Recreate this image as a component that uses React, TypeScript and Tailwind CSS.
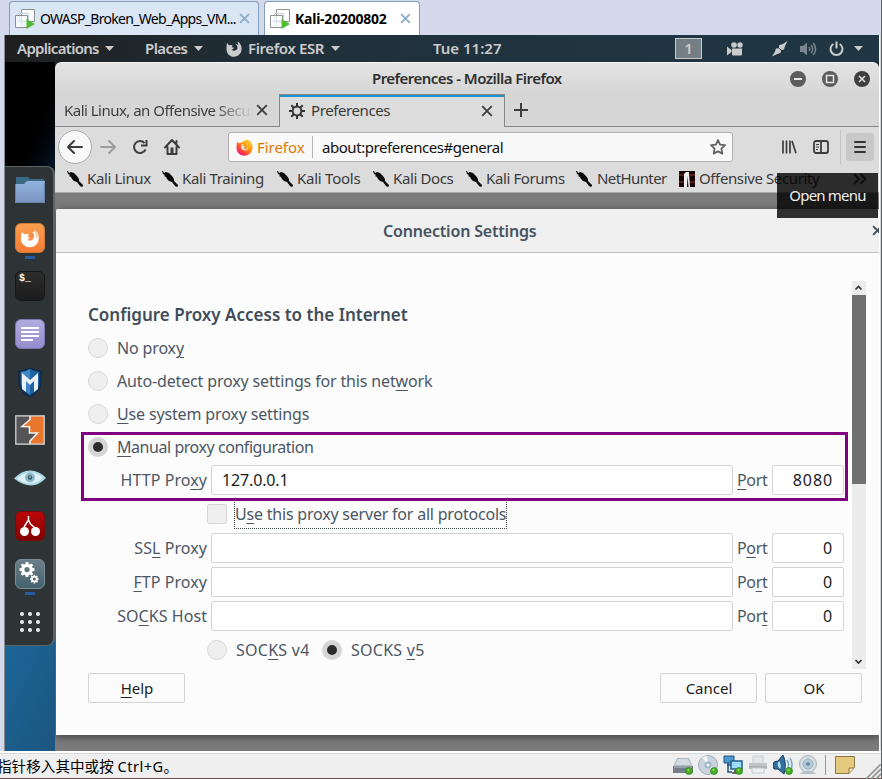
import React from "react";

const SANS = "font-['Noto_Sans','Noto_Sans_CJK_SC',sans-serif]";

function VmIcon() {
  return (
    <svg width="20" height="20" viewBox="0 0 20 20" fill="none" className="shrink-0">
      <path d="M6.5 0.500h13v12h-13z" fill="#fff" stroke="#909090" />
      <path d="M4.500 4.500h9v9h-9z" stroke="#bdd2e8" />
      <path d="M0.500 6.500h12v12h-12z" fill="#fff" fillOpacity=".7" stroke="#909090" />
      <path d="M6 8v9M2 12h9" stroke="#d6e4f2" />
      <path d="M11.500 10l8.500 5-8.500 5z" fill="#4fbb32" />
    </svg>
  );
}

function Cross({ size, color, width }: { size: number; color: string; width: number }) {
  return (
    <svg width={size} height={size} viewBox="0 0 10 10" className="shrink-0">
      <path d="M1 1l8 8M9 1l-8 8" stroke={color} strokeWidth={width} />
    </svg>
  );
}

function Caret() {
  return (
    <svg width="9" height="5" viewBox="0 0 9 5" className="shrink-0">
      <path d="M0 0h9L4.500 5z" fill="#cbcbcb" />
    </svg>
  );
}

function FoxGlyph({ size, color }: { size: number; color: string }) {
  return (
    <svg width={size} height={size} viewBox="0 0 16 16" className="shrink-0">
      <path
        d="M1 2L3 4.200 5.300 3.900 6.600 4.500 5.700 6.200 8.200 6.800 6.800 8.200 5.700 8.600C6.700 10.500 9.300 9.700 10.200 8.700L11.200 8.600C12.200 5.500 10.400 3.600 9.300 2.500L12.300 4 11.500 0.500C13.500 1.500 15.800 4 15.600 8.300 15.400 12.700 12.200 15.700 8 15.700 3.700 15.700 0.600 12.500 0.500 8.400 0.500 6 .7 4 1 2z"
        fill={color}
      />
    </svg>
  );
}

function FoxColor() {
  return (
    <svg width="17" height="17" viewBox="0 0 16 16" className="shrink-0">
      <defs>
        <linearGradient id="fox" x1="1" y1="0" x2="0.200" y2="1">
          <stop offset="0" stopColor="#ffe646" />
          <stop offset=".45" stopColor="#ff980e" />
          <stop offset=".8" stopColor="#ff3647" />
          <stop offset="1" stopColor="#e31587" />
        </linearGradient>
      </defs>
      <path d="M1 2.500L3 4 5.300 3.200 10 0.500C13.500 1.500 15.800 4 15.600 8.300 15.400 12.700 12.200 15.700 8 15.700 3.700 15.700 0.600 12.500 0.500 8.400 0.500 6 .7 4 1 2.500z" fill="url(#fox)" />
      <path d="M5.700 4.600l1.700.7L6 6.800l3 .2-2 1.400C8 10 9.600 9.500 10.600 8.300 10.500 11 5.500 11.500 4.800 8z" fill="#fff4e0" />
      <path d="M9 3.200C12 5 12 9 9.500 11" stroke="#ffd43a" strokeWidth="1" fill="none" />
    </svg>
  );
}

function HostTabs() {
  return (
    <div className="flex h-[35px] shrink-0 items-end pl-[9px]">
      <div className="flex h-[34px] w-[250px] items-center rounded-t-[4px] border border-b-0 border-[#7f9dbd] bg-[#dae6f4] pl-[5px] text-black">
        <VmIcon />
        <span className="ml-[5px] w-[199px] whitespace-nowrap text-[14px] tracking-[-0.700px]">OWASP_Broken_Web_Apps_VM...</span>
        <Cross size={11} color="#8eafcb" width={1.700} />
      </div>
      <div className="ml-[5px] flex h-[34px] w-[156px] items-center rounded-t-[4px] border border-b-0 border-[#7f9dbd] bg-white pl-[5px] text-black">
        <VmIcon />
        <span className="ml-[5px] w-[105px] whitespace-nowrap text-[14px] font-bold tracking-[-0.230px]">Kali-20200802</span>
        <Cross size={11} color="#8eafcb" width={1.700} />
      </div>
    </div>
  );
}

function TopBar() {
  return (
    <div className="flex h-[27px] shrink-0 items-center bg-linear-to-r from-[#1e1e1e] via-[#20303a] via-30% to-[#203644] pl-[12px] text-[15px] font-semibold whitespace-nowrap text-[#cbcbcb]">
      <span className="w-[88px] tracking-[-0.700px]">Applications</span>
      <Caret />
      <span className="ml-[31px] w-[49px] tracking-[-0.600px]">Places</span>
      <Caret />
      <span className="ml-[23px] flex"><FoxGlyph size={16} color="#cbcbcb" /></span>
      <span className="ml-[6px] w-[83px] tracking-[-0.400px]">Firefox ESR</span>
      <Caret />
      <span className="ml-[93px] w-[242px] tracking-[0px]">Tue 11:27</span>
      <span className="flex h-[21px] w-[27px] items-center justify-center border border-[#c7cacb] bg-[#747f85]">1</span>
      <svg width="16" height="14" viewBox="0 0 16 14" className="ml-[25px] shrink-0" fill="#cbcbcb">
        <circle cx="7" cy="3" r="2.800" />
        <circle cx="13" cy="3" r="2.700" />
        <path d="M5 6.500h10v6a1 1 0 0 1-1 1H6a1 1 0 0 1-1-1zM0 4.500L4.500 8v2L0 13.500z" />
      </svg>
      <svg width="16" height="16" viewBox="0 0 16 16" className="ml-[29px] shrink-0" fill="#cbcbcb">
        <path d="M15.500 0L12.800 5.500 12 8.500 9.500 9 6.800 6.500 7.300 4 10.500 3.300zM0 15.500l3-5L4 7.500l2.600-.3L9 9.600l-.5 2.400-3.200.9z" />
      </svg>
      <svg width="17" height="16" viewBox="0 0 17 16" className="ml-[12px] shrink-0" fill="none" stroke="#7c868c" strokeWidth="1.400">
        <path d="M0 5h3l4-3.500v13L3 11H0z" fill="#7c868c" stroke="none" />
        <path d="M9 6q1.500 2 0 4M11.200 4q3 4 0 8M13.300 2q4.500 6 0 12" />
      </svg>
      <svg width="15" height="16" viewBox="0 0 15 16" className="ml-[12px] shrink-0" fill="none" stroke="#cbcbcb" strokeWidth="2">
        <path d="M4.300 3A6 6 0 1 0 10.700 3M7.500 0.500v7" />
      </svg>
      <span className="ml-[10px]"><Caret /></span>
    </div>
  );
}

function DockCell({ children, active = false }: { children: React.ReactNode; active?: boolean }) {
  return (
    <div className="relative flex h-[48px] items-center justify-center">
      {children}
      {active && <span className="absolute bottom-[3px] h-[3px] w-[10px] bg-[#215d9c]" />}
    </div>
  );
}

const gearPath =
  "M8.300 0h3.400l.5 2.700 1.700.7L16.100 2 18.300 4.200 16.700 6.200l.7 1.700 2.600.5v3.300l-2.600.5-.7 1.700 1.600 2.200-2.300 2.300-2.200-1.600-1.700.7-.4 2.500H8.300l-.5-2.500-1.700-.7-2.200 1.600L1.600 16l1.600-2.200-.7-1.700L0 11.700V8.400l2.600-.5.7-1.700L1.700 4.100 4 1.900l2.200 1.500 1.700-.7z";

function Dock() {
  return (
    <div className="flex w-[50px] shrink-0 flex-col bg-linear-to-b from-black to-[#02101c] to-20%">
      <div className="h-[104px] shrink-0 bg-linear-to-br from-black from-50% to-[#041524]" />
      <div className="shrink-0 bg-linear-to-b from-[#020e19] from-50% to-[#1a6194] to-50%">
      <div className="rounded-r-[8px] border-y border-r-2 border-[#5f6364] bg-[#2e3436] px-0">
        <div className="-my-px pl-[2px]">
          <DockCell>
            <svg width="30" height="26" viewBox="0 0 30 26">
              <defs>
                <linearGradient id="folder" x2="0" y2="1"><stop stopColor="#8fb5de" /><stop offset="1" stopColor="#7b91c0" /></linearGradient>
              </defs>
              <path d="M1 0h12l2 2h14v9H1z" fill="#3c6986" />
              <path d="M0 7h9l3-3h18v22H0z" fill="url(#folder)" />
              <path d="M0.500 25.500h29M.5 7v18M29.500 5v20" stroke="#6685ad" />
            </svg>
          </DockCell>
          <DockCell active>
            <span className="flex size-[30px] items-center justify-center rounded-[6px] border border-[#cf7d3b] bg-linear-to-b from-[#fb9e50] to-[#f57b34]">
              <svg width="20" height="19" viewBox="0 0 22 20">
                <path d="M2 3l3 2.300 3-.4 2 1.200-2 2 3 1.100-2.500 2.200c2 2 5 .5 6-.8l1-3.600C15.500 4 14 3 12.500 2.500L16 3l-.5-2.500C20 3 21 7 20.500 11c-.7 5-4.500 8.500-9.500 8.500S1.500 16 1 11C1 8 1.200 5.500 2 3z" fill="#fff" />
                <path d="M16 1.500q3.500 3 2.500 8" fill="none" stroke="#f7a76c" />
              </svg>
            </span>
          </DockCell>
          <DockCell>
            <span className="size-[30px] rounded-[6px] border border-[#171717] bg-linear-to-b from-[#2d2d2d] to-[#1c1c1c] pl-[3px] font-['Liberation_Mono',monospace] text-[10px] leading-[13px] font-bold text-white">$_</span>
          </DockCell>
          <DockCell>
            <span className="flex size-[30px] flex-col justify-center gap-[2px] rounded-[6px] border border-[#8277b3] bg-linear-to-b from-[#b3acdf] to-[#958cce] pl-[5px]">
              <span className="h-[2px] w-[18px] bg-white" /><span className="h-[2px] w-[18px] bg-white" /><span className="h-[2px] w-[18px] bg-white" /><span className="h-[2px] w-[12px] bg-white" />
            </span>
          </DockCell>
          <DockCell>
            <svg width="24" height="30" viewBox="0 0 24 30">
              <path d="M1 4q5 0 11-3 6 3 11 3v13q-1 8-11 13Q2 25 1 17z" fill="#123c67" stroke="#0a253f" />
              <path d="M3 5q4 0 9-3v26Q4 23 3 17z" fill="#3b86c8" />
              <path d="M12 2q5 3 9 3v12q-1 6-9 11z" fill="#1f63a2" />
              <path d="M4 22V6l8 7 8-7v16l-4 3V14l-4 4-4-4v11z" fill="#e9f0f7" />
            </svg>
          </DockCell>
          <DockCell>
            <svg width="30" height="30" viewBox="0 0 30 30">
              <path d="M1 1h28v28H1z" fill="#555557" />
              <path d="M15 1v3.500L7 11.500l7.500.5v6h8L15 26v3h14V1z" fill="#e8762c" />
              <path d="M15 1v3.500L7 11.500l7.500.3V18h8L15 26v3" fill="none" stroke="#f5f1ed" strokeWidth="1.600" />
              <path d="M.8.8h28.400v28.400H.8z" fill="none" stroke="#ddd" strokeWidth="1.200" />
            </svg>
          </DockCell>
          <DockCell>
            <svg width="32" height="16" viewBox="0 0 32 16">
              <path d="M0 8.500Q8 0 17 .5T32 8q-7 7.500-15 7.500T0 8.500z" fill="#a9d7e6" />
              <path d="M3 8.500q6-5.500 13-6t13 5.500q-6 5.500-13 5.500T3 8.500z" fill="#dcf1f6" />
              <circle cx="16" cy="7.500" r="5" fill="#8db8c8" />
              <circle cx="16" cy="7.500" r="2.300" fill="#3c5b68" />
              <circle cx="16" cy="7" r="0.800" fill="#ddd" />
            </svg>
          </DockCell>
          <DockCell>
            <span className="flex size-[30px] items-center justify-center rounded-[6px] border border-[#7b0a0a] bg-linear-to-b from-[#ba0808] to-[#850000]">
              <svg width="22" height="22" viewBox="0 0 22 22">
                <path d="M9.500 1v4L5 12M9.500 5l2 4L16 13" stroke="#fff" strokeWidth="1.500" fill="none" />
                <circle cx="5.500" cy="16.500" r="4.500" fill="#fff" /><circle cx="16.500" cy="16.500" r="4.500" fill="#fff" />
              </svg>
            </span>
          </DockCell>
          <DockCell active>
            <span className="flex size-[30px] items-center justify-center rounded-[6px] border border-[#7b8d96] bg-linear-to-b from-[#6b7f89] to-[#46616e]">
              <svg width="22" height="24" viewBox="0 0 28 32">
                <path fillRule="evenodd" d={gearPath + "M10 6.500a3.500 3.500 0 1 0 0 7 3.500 3.500 0 0 0 0-7z"} fill="#fff" />
                <path fillRule="evenodd" transform="translate(14 17) scale(.58)" d={gearPath + "M10 6.500a3.500 3.500 0 1 0 0 7 3.500 3.500 0 0 0 0-7z"} fill="#fff" />
              </svg>
            </span>
          </DockCell>
          <DockCell>
            <span className="grid grid-cols-3 gap-[4px]">
              {Array.from({ length: 9 }, (_, i) => <span key={i} className="size-[4px] rounded-full bg-[#eee]" />)}
            </span>
          </DockCell>
        </div>
      </div>
      </div>
      <div className="grow bg-linear-to-br from-[#1b6698] to-[#1c557f]" />
    </div>
  );
}

function WindowButton({ children, dark = false }: { children: React.ReactNode; dark?: boolean }) {
  return (
    <svg width="16" height="16" viewBox="0 0 16 16" fill="none" stroke="#e4e4e4" strokeWidth="1.500">
      <circle cx="8" cy="8" r="8" fill={dark ? "#404040" : "#5c5c5c"} stroke="none" />
      {children}
    </svg>
  );
}

function TitleBar() {
  return (
    <div className="flex h-[32px] shrink-0 items-center rounded-t-[6px] border-t border-[#f4f4f4] bg-linear-to-b from-[#e3e3e3] to-[#d6d6d6]">
      <span className="ml-[317px] w-[418px] whitespace-nowrap text-[15px] font-semibold tracking-[-0.540px] text-[#303030]">Preferences - Mozilla Firefox</span>
      <span className="flex gap-[16px]">
        <WindowButton><path d="M4 8h8" strokeWidth="2" /></WindowButton>
        <WindowButton><path d="M4.500 4.500h7v7h-7z" /></WindowButton>
        <WindowButton dark><path d="M5 5l6 6M11 5l-6 6" /></WindowButton>
      </span>
    </div>
  );
}

function BrowserTabs() {
  return (
    <div className="flex h-[33px] shrink-0 bg-[#d6d6d6] text-[15px] whitespace-nowrap text-[#3a3a3a]">
      <div className="flex w-[224px] items-center border-b border-[#858585] pl-[9px]">
        <span className="w-[187px] bg-linear-to-r from-[#3a3a3a] from-80% to-[#d0d0d0] bg-clip-text tracking-[-0.520px] text-transparent">Kali Linux, an Offensive Secu</span>
        <span className="ml-[5px] flex"><Cross size={12} color="#3d3d3d" width={1.500} /></span>
      </div>
      <div className="flex w-[226px] items-center border-x border-t border-[#858585] bg-[#dcdcdc] shadow-[inset_0_2px_0_#2090d0]">
        <svg width="16" height="16" viewBox="0 0 16 16" className="ml-[9px]" fill="none" stroke="#333">
          <circle cx="8" cy="8" r="4.400" strokeWidth="2" />
          <path d="M8 0v3M8 13v3M0 8h3M13 8h3M2.300 2.300l2.200 2.200M11.500 11.500l2.200 2.200M13.700 2.300l-2.200 2.200M4.500 11.500l-2.200 2.200" strokeWidth="2" />
        </svg>
        <span className="ml-[6px] w-[170px] pb-[2px] tracking-[-0.400px]">Preferences</span>
        <Cross size={12} color="#3d3d3d" width={1.500} />
      </div>
      <div className="flex grow items-center border-b border-[#858585] pl-[9px]">
        <svg width="14" height="14" viewBox="0 0 14 14"><path d="M7 0v14M0 7h14" stroke="#3d3d3d" strokeWidth="2" /></svg>
      </div>
    </div>
  );
}

function NavBar() {
  return (
    <div className="flex h-[41px] shrink-0 items-center bg-[#dcdcdc] pb-px pl-[3px]">
      <span className="flex size-[34px] items-center justify-center rounded-full border border-[#aaa] bg-[#f8f8f8]">
        <svg width="16" height="16" viewBox="0 0 16 16" fill="none" stroke="#3d3d3d" strokeWidth="2" strokeLinecap="round" strokeLinejoin="round"><path d="M15 8H1M7 2L1 8l6 6" /></svg>
      </span>
      <svg width="16" height="16" viewBox="0 0 16 16" className="ml-[8px]" fill="none" stroke="#9c9c9c" strokeWidth="2" strokeLinecap="round" strokeLinejoin="round"><path d="M1 8h14M9 2l6 6-6 6" /></svg>
      <svg width="16" height="16" viewBox="0 0 16 16" className="ml-[16px]" fill="none" stroke="#3d3d3d" strokeWidth="2"><path d="M13.500 10.500A6 6 0 1 1 12.500 4M14.500 1v5.500H9" /></svg>
      <svg width="16" height="16" viewBox="0 0 16 16" className="ml-[16px]" fill="none" stroke="#3d3d3d" strokeWidth="2" strokeLinejoin="round" strokeLinecap="round"><path d="M1 8.500L8 1l7 7.500M3.500 8v7h9V8M12.500 2v2" /><path d="M6.500 8.500h3V14h-3z" fill="#3d3d3d" stroke="none" /></svg>
      <div className="ml-[48px] flex h-[30px] w-[505px] items-center rounded-[3px] border border-[#b1b1b1] bg-[#f9f9f9] pl-[7px] text-[15px] whitespace-nowrap">
        <FoxColor />
        <span className="ml-[4px] w-[55px] tracking-[-0.050px] text-[#e07800]">Firefox</span>
        <span className="h-[22px] w-px bg-[#b5b5b5]" />
        <span className="ml-[9px] w-[388px] tracking-[-0.450px] text-[#111]">about:preferences#general</span>
        <svg width="16" height="16" viewBox="0 0 16 16" fill="none" stroke="#626262" strokeWidth="1.800" strokeLinejoin="round"><path d="M8 1l2.100 4.600 4.900.6-3.600 3.400.9 5L8 12.200l-4.300 2.400.9-5L1 6.200l4.900-.6z" /></svg>
      </div>
      <svg width="16" height="16" viewBox="0 0 16 16" className="ml-[48px]" fill="none" stroke="#3d3d3d" strokeWidth="2"><path d="M2 1.500v13M5.500 1.500v13M9 1.500v13M11 2l4 12.300" strokeWidth="1.700" /></svg>
      <svg width="16" height="14" viewBox="0 0 16 14" className="ml-[16px]" fill="none" stroke="#3d3d3d" strokeWidth="1.800"><rect x="1" y="1" width="14" height="12" rx="2" /><path d="M8 1v12" /><path d="M3 4.500h3M3 7h3M3 9.500h2" strokeWidth="1" /></svg>
      <span className="ml-[11px] h-[34px] w-px bg-[#c3c3c3]" />
      <span className="ml-[5px] flex size-[28px] flex-col items-center justify-center gap-[3px] rounded-[3px] bg-[#c8c8c8]">
        <span className="h-[2px] w-[12px] rounded bg-[#333]" /><span className="h-[2px] w-[12px] rounded bg-[#333]" /><span className="h-[2px] w-[12px] rounded bg-[#333]" />
      </span>
    </div>
  );
}

function KaliIcon() {
  return (
    <svg width="16" height="16" viewBox="0 0 16 16" className="shrink-0">
      <path d="M0 0h1l1 2 2-1 3 1 3 3 2 3 0 2 4 4v1l-1 1-2-1-3-4-3-1-2-2-1-2-2-1 1-1-2-1z" fill="#0b0b0b" />
    </svg>
  );
}

function Bookmarks() {
  return (
    <div className="relative flex h-[25px] shrink-0 items-center border-b border-[#a7a7a7] bg-[#dcdcdc] pb-[3px] pl-[12px] text-[15px] tracking-[-0.380px] whitespace-nowrap text-[#3a3a3a]">
      <KaliIcon /><span className="ml-[4px] w-[75px]">Kali Linux</span>
      <KaliIcon /><span className="ml-[4px] w-[95px]">Kali Training</span>
      <KaliIcon /><span className="ml-[4px] w-[76px] tracking-[-0.250px]">Kali Tools</span>
      <KaliIcon /><span className="ml-[4px] w-[73px]">Kali Docs</span>
      <KaliIcon /><span className="ml-[4px] w-[90px]">Kali Forums</span>
      <KaliIcon /><span className="ml-[5px] w-[82px] tracking-[-0.600px]">NetHunter</span>
      <svg width="16" height="16" viewBox="0 0 16 16" className="shrink-0"><path d="M0 0h16v16H0z" fill="#160303" /><path d="M0 4h5M11 4h5M0 11h5M11 11h5" stroke="#541b1b" strokeWidth="2" /><path d="M5 16V3l2-2h3l1 15h-1.500L8.500 5 8 16z" fill="#eee" /></svg>
      <span className="ml-[4px] w-[154px]">Offensive Security</span>
      <svg width="14" height="12" viewBox="0 0 14 12" className="shrink-0" fill="none" stroke="#3d3d3d" strokeWidth="2"><path d="M1 1l5 5-5 5M7.500 1l5 5-5 5" /></svg>
      <div className="absolute top-[5px] left-[722px] z-10 flex h-[45px] w-[101px] items-center justify-center bg-black/80 text-[15px] tracking-[-0.800px] text-[#eee]">Open menu</div>
    </div>
  );
}

function U({ children }: { children: string }) {
  return <span className="underline decoration-1 underline-offset-[3px]">{children}</span>;
}

function Radio({ on = false }: { on?: boolean }) {
  return on ? (
    <span className="flex size-[20px] shrink-0 items-center justify-center rounded-full bg-[#d5d5d5]"><span className="size-[10px] rounded-full bg-[#2c2c2c]" /></span>
  ) : (
    <span className="size-[20px] shrink-0 rounded-full border border-[#d7d7d7] bg-[#efefef]" />
  );
}

function Option({ on, children }: { on?: boolean; children: React.ReactNode }) {
  return (
    <div className="flex h-[33px] items-center">
      <Radio on={on} />
      <span className="ml-[9px]">{children}</span>
    </div>
  );
}

function ProxyRow({ label, host = "", port, portLabel }: { label: React.ReactNode; host?: string; port: string; portLabel: React.ReactNode }) {
  return (
    <div className="flex h-[34px] items-center gap-[4px]">
      <span className="w-[119px] text-right tracking-[0.060px]">{label}</span>
      <span className="flex h-[30px] w-[522px] items-center rounded-[2px] border border-[#d3d3d5] bg-white pl-[10px] tracking-[-0.150px] text-[#1c1c1c]">{host}</span>
      <span className="w-[31px] tracking-[-0.350px]">{portLabel}</span>
      <span className="flex h-[30px] w-[72px] items-center justify-end rounded-[2px] border border-[#d3d3d5] bg-white pr-[10px] text-[16px] tracking-[0.900px] text-[#1c1c1c]">{port}</span>
    </div>
  );
}

function Button({ children }: { children: React.ReactNode }) {
  return <button className="h-[30px] w-[97px] rounded-[2px] border border-[#d3d3d5] bg-[#fbfbfb] pl-[1px] text-[15px] text-[#1c1c1c]">{children}</button>;
}

function Arrow({ down = false }: { down?: boolean }) {
  return (
    <svg width="14" height="14" viewBox="0 0 14 14" fill="none" stroke="#333" strokeWidth="1.700">
      <path d={down ? "M3.500 5l3 3 3-3" : "M3.500 8.500l3-3 3 3"} />
    </svg>
  );
}

function Dialog() {
  return (
    <div className="ml-px flex h-[526px] w-[823px] shrink-0 flex-col overflow-hidden rounded-tl-[2px] bg-[#fcfcfc] shadow-[0_2px_8px_rgba(0,0,0,.5)]">
      <div className="flex h-[44px] shrink-0 items-center border-b border-[#c2c2c2] bg-[#f0f0f0]">
        <span className="ml-[327px] w-[489px] shrink-0 whitespace-nowrap text-[16px] font-semibold tracking-[-0.180px] text-[#465360]">Connection Settings</span>
        <Cross size={11} color="#46535f" width={1.800} />
      </div>
      <div className="flex h-[416px] shrink-0">
        <div className="relative w-[796px] pt-[45px] pl-[32px] text-[16px] tracking-[-0.150px] whitespace-nowrap text-[#4c5763]">
          <h2 className="flex h-[33px] items-center text-[17px] font-semibold tracking-[0px] text-[#414d58]">Configure Proxy Access to the Internet</h2>
          <Option>No prox<U>y</U></Option>
          <Option>Auto-detect proxy settings for this net<U>w</U>ork</Option>
          <Option><U>U</U>se system proxy settings</Option>
          <Option on><span className="tracking-[-0.450px]"><U>M</U>anual proxy configuration</span></Option>
          <ProxyRow label={<>HTTP Pro<U>x</U>y</>} host="127.0.0.1" port="8080" portLabel={<><U>P</U>ort</>} />
          <div className="flex h-[34px] items-center pl-[119px]">
            <span className="size-[20px] rounded-[2px] border border-[#d7d7d7] bg-[#efefef]" />
            <span className="ml-[7px] flex h-[30px] w-[273px] items-center border border-dotted border-[#3c444c] tracking-[-0.210px]">U<U>s</U>e this proxy server for all protocols</span>
          </div>
          <ProxyRow label={<>SS<U>L</U> Proxy</>} port="0" portLabel={<>P<U>o</U>rt</>} />
          <ProxyRow label={<><U>F</U>TP Proxy</>} port="0" portLabel={<>Po<U>r</U>t</>} />
          <ProxyRow label={<>SO<U>C</U>KS Host</>} port="0" portLabel={<>Por<U>t</U></>} />
          <div className="flex h-[34px] items-center pl-[119px] tracking-[0.250px]">
            <Radio /><span className="ml-[9px] w-[86px]">SOC<U>K</U>S v4</span>
            <Radio on /><span className="ml-[9px]">SOCKS <U>v</U>5</span>
          </div>
          <div className="pointer-events-none absolute top-[179px] left-[25px] h-[69px] w-[767px] border-3 border-[#800080]" />
        </div>
        <div className="mt-[28px] flex h-[388px] w-[14px] flex-col justify-between bg-[#ececec]">
          <div className="flex flex-col"><Arrow /><div className="h-[189px] bg-[#707070]" /></div>
          <Arrow down />
        </div>
      </div>
      <div className="flex pt-[4px] pl-[32px]">
        <Button><U>H</U>elp</Button>
        <div className="ml-[475px] flex gap-[8px]">
          <Button>Cancel</Button>
          <Button>OK</Button>
        </div>
      </div>
    </div>
  );
}

function GreenDot() {
  return <><circle cx="16" cy="16" r="3.500" fill="#43ad24" stroke="#347f21" strokeWidth=".7" /><circle cx="15.500" cy="15" r="1.200" fill="#83d35d" /></>;
}

function StatusIcon({ children }: { children: React.ReactNode }) {
  return <svg width="20" height="20" viewBox="0 0 20 20" className="shrink-0">{children}</svg>;
}

function StatusBar() {
  return (
    <div className="flex h-[28px] shrink-0 items-center border-t border-b border-t-white border-b-[#6b4a4a] bg-[#efefef] shadow-[inset_0_1px_0_#fff,inset_0_2px_0_#d8d8d8]">
      <span className="-ml-[3px] w-[676px] pt-[3px] text-[14.600px] whitespace-nowrap text-black">指针移入其中或按 <span className="tracking-[0.450px]">Ctrl+G</span>。</span>
      <div className="flex gap-[5px]">
        <StatusIcon><path d="M4 3h12l4 9H0z" fill="#aeb8c1" /><path d="M5 4h10l3 6H2z" fill="#d3dae0" /><path d="M0 11h20v7H0z" fill="#737e88" /><path d="M1 12h18" stroke="#b6bdc3" /><GreenDot /></StatusIcon>
        <StatusIcon><circle cx="10" cy="10" r="9.500" fill="#c9d3dc" stroke="#a4aeb6" /><path d="M10 10L4 2.500A9 9 0 0 1 9 1zM10 10l8 4a9 9 0 0 1-4 4z" fill="#f2f5f7" /><circle cx="10" cy="10" r="3.500" fill="#9db5c9" /><circle cx="10" cy="10" r="1.500" fill="#fff" /><GreenDot /></StatusIcon>
        <StatusIcon><path d="M1 1h10v7H1z" fill="#4b9ad3" stroke="#245176" /><path d="M4 10h5M5 8v9h4" stroke="#245176" strokeWidth="1.500" fill="none" /><path d="M8 6h11v8H8z" fill="#9bdcff" stroke="#235c8c" strokeWidth="1.500" /><path d="M12 15v3H9h8" stroke="#444" strokeWidth="1.500" /><GreenDot /></StatusIcon>
        <StatusIcon><path d="M5 1h10v9H5z" fill="#e1e5e8" stroke="#ccc" /><path d="M1 8h18v6H1z" fill="#bfc4c8" /><path d="M1 12h18" stroke="#979da2" /><path d="M4 13h12v5H4z" fill="#edf0f1" stroke="#c6c9ca" /></StatusIcon>
        <StatusIcon><path d="M1 7l4-1 5-6q4 8 1 19l-6-5H1q-2-3 0-7z" fill="#336f9e" stroke="#173f63" /><path d="M6 6q3 4 1 8Q3 10 6 6z" fill="#b8def1" /><path d="M14 5q3 5 0 10M17 3q4 7 0 14" fill="none" stroke="#6fa6d0" strokeWidth="1.500" /><GreenDot /></StatusIcon>
        <StatusIcon><circle cx="10" cy="9" r="8.500" fill="#d7dfe3" stroke="#a9b3b9" /><circle cx="10" cy="9" r="5" fill="#b4cddb" stroke="#9db0bb" /><circle cx="10" cy="9" r="2" fill="#6c8c9d" /><path d="M4 17q6-2 12 0l2 2H2z" fill="#bac2c7" /></StatusIcon>
      </div>
      <span className="ml-[7px] h-[20px] w-px bg-[#989898]" />
      <svg width="20" height="18" viewBox="0 0 20 18" className="ml-[9px] shrink-0"><path d="M.5.5h19v11l-5.500 6H.5z" fill="#e5c97e" stroke="#8c7549" /><path d="M14 17v-5h5" fill="#f7e6b3" stroke="#8c7549" /></svg>
      <svg width="15" height="15" viewBox="0 0 15 15" className="mt-[12px] ml-[11px] shrink-0" fill="none" stroke="#999" strokeWidth="1.800"><path d="M0 15L15 0M5 15L15 5M10 15l5-5" /></svg>
    </div>
  );
}

export default function App() {
  return (
    <div className={`flex h-[779px] w-[882px] overflow-hidden bg-[#d4d9ec] ${SANS}`}>
      <div className="flex w-[881px] shrink-0 flex-col">
        <HostTabs />
        <div className="flex h-[716px] shrink-0 border-r border-l-[1px] border-r-[#d6d6d6] border-l-[#858a93] bg-white pr-px ml-[4px]">
          <div className="flex w-[874px] flex-col overflow-hidden bg-[#1b2932]">
            <TopBar />
            <div className="flex h-[689px] shrink-0">
              <Dock />
              <div className="flex w-[824px] flex-col overflow-hidden rounded-t-[6px] bg-[#7b7b7b]">
                <TitleBar />
                <BrowserTabs />
                <NavBar />
                <Bookmarks />
                <div className="h-[16px] shrink-0" />
                <Dialog />
              </div>
            </div>
          </div>
        </div>
        <StatusBar />
      </div>
      <div className="w-px bg-[#5c6266]" />
    </div>
  );
}
